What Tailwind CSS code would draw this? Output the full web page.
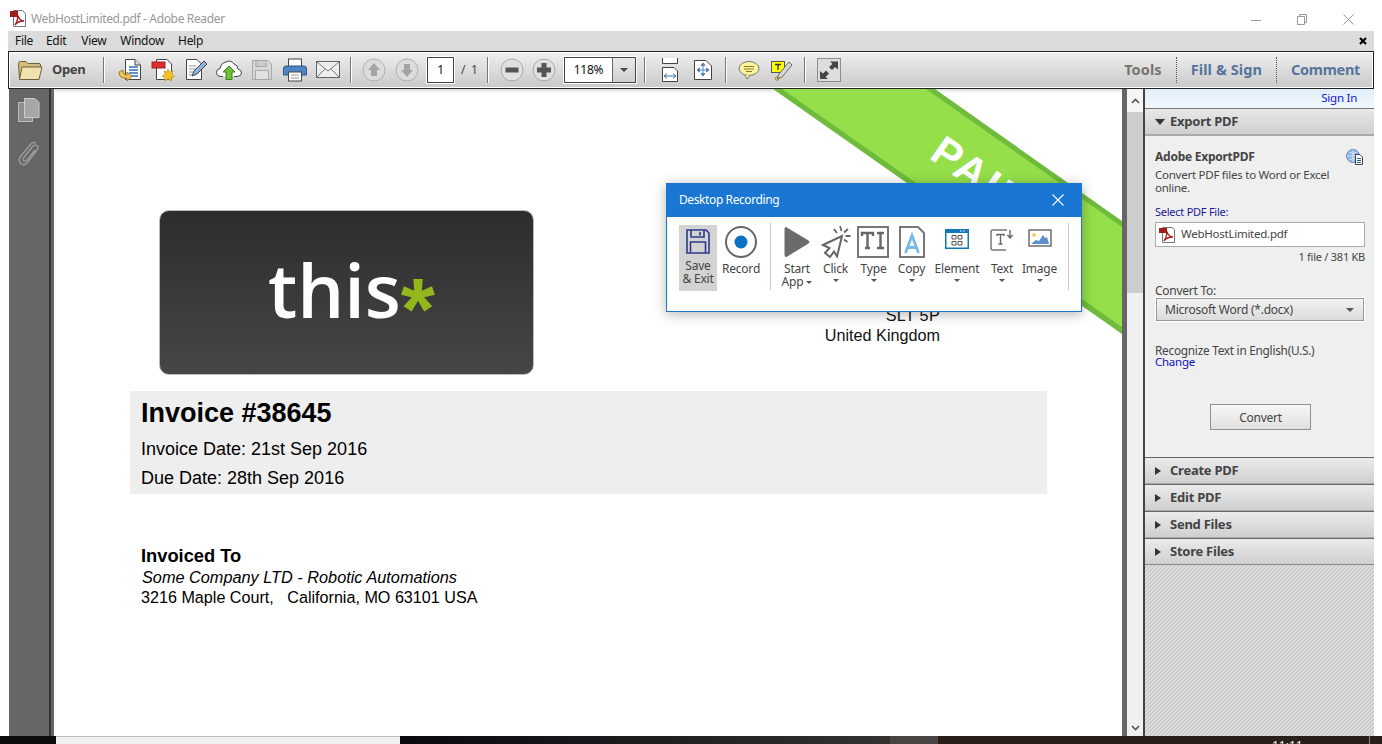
<!DOCTYPE html>
<html><head><meta charset="utf-8"><script src="https://cdn.jsdelivr.net/npm/@tailwindcss/browser@4"></script></head>
<body class="m-0 bg-white overflow-hidden">
<div class="w-[1382px] h-[744px] flex flex-col overflow-hidden font-['Noto_Sans',sans-serif] text-[12px] tracking-[-0.25px] text-[#333] bg-white relative">

<!-- title bar -->
<div class="h-[31px] flex items-center pt-[7px] pl-[10px] pr-[28px] shrink-0">
  <svg width="16" height="18" viewBox="0 0 16 18" class="mr-[5px]"><path d="M3.5 3.5V16.5H15.5V3.5L12.5 .5H3.5Z" fill="#fff" stroke="#777"/><rect x="0" y="1" width="8" height="6" fill="#a01c1c"/><path d="M5 15C8 10 8 7 7.5 5C9 9 11 11 14 11C10 11 7 12 5 15Z" fill="none" stroke="#b01818" stroke-width="1.4"/></svg>
  <span class="text-[#999] text-[12px] tracking-[-0.35px]">WebHostLimited.pdf - Adobe Reader</span>
  <div class="ml-auto flex items-center gap-[35px]">
    <svg width="11" height="11" viewBox="0 0 11 11"><path d="M0 6.5H10" stroke="#999"/></svg>
    <svg width="11" height="11" viewBox="0 0 11 11"><path d="M.5 2.5H7.5V10.5H.5ZM2.5 2.5V.5H9.5V8.5H7.5" fill="none" stroke="#999"/></svg>
    <svg width="11" height="11" viewBox="0 0 11 11"><path d="M.5 .5L10.5 10.5M10.5 .5L.5 10.5" stroke="#999"/></svg>
  </div>
</div>

<!-- window -->
<div class="flex-1 mx-[8px] flex flex-col min-h-0">
  <div class="h-[20px] bg-[#dcdcdc] flex items-center pl-[7px] pr-[7px] gap-[14px] text-[#111] shrink-0 tracking-[-0.3px]">
    <span class="-mr-[1px]">File</span><span class="mr-[1px]">Edit</span><span>View</span><span>Window</span><span>Help</span>
    <svg class="ml-auto" width="8" height="8" viewBox="0 0 8 8"><path d="M1 1L7 7M7 1L1 7" stroke="#000" stroke-width="2.2"/></svg>
  </div>

  <!-- toolbar -->
  <div class="h-[38px] shrink-0 border border-[#222] outline outline-1 outline-white -outline-offset-2 bg-gradient-to-b from-[#efefef] to-[#c9c9c9] flex items-center pl-[9px] pr-[13px]">
    <svg width="25" height="22" viewBox="0 0 25 22" class="mr-[9px]"><path d="M1.5 20.5L.5 4.5Q.5 2.5 2.5 2.5H8L10 4.5H21Q22.5 4.5 22.5 6V8" fill="#d4bd7c" stroke="#6d5f3c"/><path d="M1.5 20.5H21L24 8H4Z" fill="#f1e3b0" stroke="#6d5f3c"/></svg>
    <span class="font-bold text-[13px] text-[#444] w-[33px] tracking-[-0.35px]">Open</span>
    <i class="w-[1px] h-[26px] bg-[#777] border-r border-white box-content ml-[18px] mr-[8px]"></i>
    <div class="w-[33px] flex justify-center"><svg width="24" height="24" viewBox="0 0 24 24"><path d="M7.5 1.5H17L22.5 7V21.5H7.5Z" fill="#fff" stroke="#444"/><path d="M17 1.5V7H22.5" fill="#ddd" stroke="#444"/><path d="M11 9H20M11 12H20M11 15H20M13 18H20" stroke="#2c6dc2" stroke-width="1.4"/><path d="M1 14Q1 21 9 20V23L14 18.5L9 14V17Q5 17 5 12Z" fill="#eec45a" stroke="#a77a20"/></svg></div>
    <div class="w-[33px] flex justify-center"><svg width="24" height="24" viewBox="0 0 24 24"><path d="M5.5 1.5H16L20.5 6V21.5H5.5Z" fill="#fff" stroke="#444"/><rect x="1" y="4" width="13" height="6" fill="#e02c2c" stroke="#922"/><path d="M17 11L18.5 14L22 13L21 16.500L23.500 18.500L20.500 19.500L20.500 23L17 21L14 23L14 19.500L11 18.500L14 16L13 13L16 14Z" fill="#f3bf2b" stroke="#b98a1a" stroke-width=".6"/></svg></div>
    <div class="w-[33px] flex justify-center"><svg width="24" height="24" viewBox="0 0 24 24"><path d="M2.500 1.500H13L17.500 6V21.500H2.500Z" fill="#fff" stroke="#444"/><path d="M5 8H12M5 11H12M5 14H9M5 17H8" stroke="#999"/><path d="M8 18L10 13L20 3L23 6L13 16Z" fill="#8fb2d8" stroke="#444"/></svg></div>
    <div class="w-[33px] flex justify-center"><svg width="26" height="22" viewBox="0 0 26 22"><path d="M7 17.500H5Q.5 17 .5 13.500Q.5 10 4 9.500Q5 4 10 3Q15 .5 18 5Q22 6 22 10Q25.500 11 25.500 14Q25 17.500 21 17.500H18" fill="#fff" stroke="#444"/><path d="M13 7L19 13H16V20.500H10V13H7Z" fill="#6cc13a" stroke="#3d7d1b"/></svg></div>
    <div class="w-[33px] flex justify-center"><svg width="20" height="20" viewBox="0 0 20 20"><path d="M.5 .5H16L19.500 4V19.500H.5Z" fill="#d7d7d7" stroke="#a8a8a8"/><rect x="4" y=".5" width="10" height="6" fill="#ccc" stroke="#a8a8a8"/><rect x="3.500" y="10.500" width="13" height="9" fill="#e2e2e2" stroke="#a8a8a8"/></svg></div>
    <div class="w-[33px] flex justify-center"><svg width="24" height="24" viewBox="0 0 24 24"><rect x="5.500" y="1" width="13" height="8" fill="#fff" stroke="#444"/><path d="M3 8H21Q23.500 8 23.500 11V17H.5V11Q.5 8 3 8Z" fill="#4e86c4" stroke="#34527b"/><rect x="5.500" y="14" width="13" height="9" fill="#fff" stroke="#444"/><path d="M8 17H16M8 20H16" stroke="#999"/></svg></div>
    <div class="w-[33px] flex justify-center"><svg width="24" height="18" viewBox="0 0 24 18"><rect x=".5" y=".5" width="23" height="16" fill="#eee" stroke="#666"/><path d="M1 1L12 10L23 1M1 16L9 8M23 16L15 8" fill="none" stroke="#777"/></svg></div>
    <i class="w-[1px] h-[26px] bg-[#777] border-r border-white box-content ml-[6px] mr-[5px]"></i>
    <div class="w-[33px] flex justify-center"><svg width="24" height="24" viewBox="0 0 24 24"><circle cx="12" cy="12" r="11" fill="#dcdcdc" stroke="#b0b0b0"/><path d="M12 5L18 12H15V18H9V12H6Z" fill="#a4a4a4"/></svg></div>
    <div class="w-[33px] flex justify-center"><svg width="24" height="24" viewBox="0 0 24 24"><circle cx="12" cy="12" r="11" fill="#dcdcdc" stroke="#b0b0b0"/><path d="M12 19L18 12H15V6H9V12H6Z" fill="#a4a4a4"/></svg></div>
    <div class="w-[27px] h-[26px] bg-white border border-[#444] outline outline-1 outline-white text-[#111] text-[12px] flex items-center justify-center ml-[4px]">1</div>
    <span class="w-[25px] text-[#444] text-[12px] pl-[7px] whitespace-pre">/  1</span>
    <i class="w-[1px] h-[26px] bg-[#777] border-r border-white box-content ml-[8px] mr-[6px]"></i>
    <div class="w-[33px] flex justify-center -mr-[1px]"><svg width="24" height="24" viewBox="0 0 24 24"><circle cx="12" cy="12" r="11" fill="#e0e0e0" stroke="#a8a8a8"/><rect x="5.500" y="9.500" width="13" height="5" fill="#555"/></svg></div>
    <div class="w-[33px] flex justify-center"><svg width="24" height="24" viewBox="0 0 24 24"><circle cx="12" cy="12" r="11" fill="#e0e0e0" stroke="#a8a8a8"/><path d="M9.500 5H14.500V9.500H19V14.500H14.500V19H9.500V14.500H5V9.500H9.500Z" fill="#555"/></svg></div>
    <div class="ml-[4px] w-[72px] h-[26px] border border-[#444] outline outline-1 outline-white flex">
      <span class="w-[48px] bg-white text-[#111] text-[12px] flex items-center justify-center border-r border-[#666]">118%</span>
      <span class="flex-1 flex items-center justify-center"><i class="border-x-[4px] border-x-transparent border-t-[4px] border-t-[#444]"></i></span>
    </div>
    <i class="w-[1px] h-[26px] bg-[#777] border-r border-white box-content ml-[8px] mr-[7px]"></i>
    <div class="w-[33px] flex justify-center"><svg width="18" height="24" viewBox="0 0 18 24"><path d="M1.500 0V5.500H16.500V0M1.500 9.500H13L16.500 13V23.500H1.500Z" fill="#fff" stroke="#444"/><path d="M3 18H15M3 18L6 15.500M3 18L6 20.500M15 18L12 15.500M15 18L12 20.500" stroke="#3f6fb0" fill="none"/></svg></div>
    <div class="w-[33px] flex justify-center"><svg width="18" height="20" viewBox="0 0 18 20"><path d="M.5 .5H12L17.500 6V19.500H.5Z" fill="#fff" stroke="#444"/><path d="M9 3V16M3 10H15M9 3L7 5.500H11ZM9 16L7 13.500H11ZM3 10L5.500 8V12ZM15 10L12.500 8V12Z" stroke="#5b86bd" fill="#5b86bd"/></svg></div>
    <i class="w-[1px] h-[26px] bg-[#777] border-r border-white box-content ml-[6px] mr-[5px]"></i>
    <div class="w-[33px] flex justify-center"><svg width="22" height="20" viewBox="0 0 22 20"><ellipse cx="11" cy="8.500" rx="10" ry="7" fill="#fbf39a" stroke="#777"/><path d="M7 15L9 19L12 15.500" fill="#fbf39a" stroke="#777"/><path d="M6 6.500H16M6 9H16M8 11.500H14" stroke="#8a7a30"/></svg></div>
    <div class="w-[33px] flex justify-center"><svg width="22" height="22" viewBox="0 0 22 22"><rect x=".5" y="2.500" width="13" height="11" fill="#ff0" stroke="#555"/><path d="M4 5.500H10M7 5.500V11" stroke="#333" stroke-width="1.400"/><path d="M6 20L8 15L18 3L21 6L11 18Z" fill="#d8d8d8" stroke="#666"/><circle cx="6" cy="19.500" r="1.800" fill="none" stroke="#a88f20"/></svg></div>
    <i class="w-[1px] h-[26px] bg-[#777] border-r border-white box-content ml-[6px] mr-[6px]"></i>
    <div class="w-[33px] flex justify-center"><svg width="24" height="24" viewBox="0 0 24 24"><rect x=".5" y=".5" width="23" height="23" fill="#ddd" stroke="#8d8d8d"/><path d="M13 3.500H21V11.500L18 9L15 12L12 9L15.500 6ZM11 21H3V13L6 15.500L9 12.500L12 15.500L8.500 19Z" fill="#444"/></svg></div>
    <div class="ml-auto flex items-center font-bold text-[14.500px] tracking-[-0.3px]">
      <span class="text-[#77736e] tracking-[0.1px]">Tools</span>
      <i class="h-[26px] border-l border-dotted border-[#555] ml-[14px] mr-[14px]"></i>
      <span class="text-[#56749c] tracking-[0.1px]">Fill &amp; Sign</span>
      <i class="h-[26px] border-l border-dotted border-[#555] ml-[14px] mr-[14px]"></i>
      <span class="text-[#56749c]">Comment</span>
    </div>
  </div>

  <!-- main -->
  <div class="flex-1 flex min-h-0">
    <!-- rail -->
    <div class="w-[40px] ml-[1px] bg-[#666] shrink-0 flex flex-col items-center pt-[9px] gap-[19px]">
      <svg width="22" height="24" viewBox="0 0 22 24"><rect x=".5" y="4.500" width="14" height="19" fill="#8e8e8e" stroke="#bbb"/><path d="M6.500 .5H17L21 4.500V19.500H6.500Z" fill="#a6a6a6" stroke="#ccc"/></svg>
      <svg width="22" height="26" viewBox="0 0 22 26"><path d="M18 2Q15 .5 12.500 3.500L2.500 15.500Q0 19 2.500 22.500Q6 25 9 22L19 9Q21 6 19 4.500Q17 3 14.500 5.500L5.500 17Q4.500 19 6 20Q7.500 20.500 9 19L17 9" fill="none" stroke="#9a9a9a" stroke-width="1.500"/></svg>
    </div>
    <div class="w-[5px] shrink-0 bg-[#666] border-l-2 border-[#333]"></div>

    <!-- document -->
    <div class="w-[1068px] shrink-0 bg-white relative overflow-hidden pt-[121px] text-black font-['Liberation_Sans',sans-serif] tracking-normal">
      <div class="absolute left-0 right-0 top-0 h-[4px] bg-gradient-to-b from-[#ddd] to-white"></div>
      <svg class="absolute left-0 top-0" width="1068" height="260" viewBox="0 0 1068 260"><polygon points="719,0 881,0 1068,132 1068,245" fill="#6fbb3c"/><polygon points="728,0 872,0 1068,138 1068,238" fill="#95df4b"/></svg>
      <div class="absolute left-[894px] top-[40px] text-white font-bold text-[42px] leading-none rotate-[35deg] origin-top-left tracking-[3px]">PAID</div>

      <div class="flex items-end pl-[105px] w-[886px] justify-between relative">
        <div class="w-[375px] h-[165px] rounded-[10px] bg-gradient-to-b from-[#2d2d2d] to-[#464646] border border-[#bbb] flex items-center justify-center pl-[10px] pb-[6px] overflow-hidden">
          <span class="font-['Open_Sans',sans-serif] font-semibold text-[74px] leading-none text-white blur-[0.6px] whitespace-nowrap">this<span class="font-['Liberation_Sans',sans-serif] font-bold text-[#93b81c] text-[88px] leading-[0] relative top-[21px]">*</span></span>
        </div>
        <div class="text-right text-[16.200px] leading-[20px] mb-[30px] text-[#111]"><div class="tracking-[0.3px]">SLT 5P</div><div>United Kingdom</div></div>
      </div>

      <div class="ml-[76px] mr-[76px] mt-[16px] w-[917px] h-[103px] bg-[#eeeeee] pl-[11px] pt-[6px]">
        <div class="font-bold text-[27px] leading-[32px]">Invoice #38645</div>
        <div class="text-[18px] leading-[29px] mt-[6px]">Invoice Date: 21st Sep 2016</div>
        <div class="text-[18px] leading-[29px]">Due Date: 28th Sep 2016</div>
      </div>

      <div class="ml-[87px] mt-[50px]">
        <div class="font-bold text-[18.300px] leading-[23px]">Invoiced To</div>
        <div class="italic text-[16.300px] leading-[20px] pl-[1px]">Some Company LTD - Robotic Automations</div>
        <div class="text-[16.150px] leading-[20px] whitespace-pre">3216 Maple Court,   California, MO 63101 USA</div>
      </div>
    </div>

    <div class="w-[5px] shrink-0 bg-[#666]"></div>

    <!-- scrollbar -->
    <div class="w-[16px] shrink-0 bg-[#f0f0f0] flex flex-col">
      <div class="h-[23px] flex items-center justify-center bg-[#f5f5f5]"><svg width="9" height="6" viewBox="0 0 9 6"><path d="M1 5L4.500 1.500L8 5" fill="none" stroke="#555" stroke-width="1.600"/></svg></div>
      <div class="h-[181px] bg-[#cdcdcd]"></div>
      <div class="mt-auto h-[17px] flex items-center justify-center"><svg width="9" height="6" viewBox="0 0 9 6"><path d="M1 1L4.500 4.500L8 1" fill="none" stroke="#555" stroke-width="1.600"/></svg></div>
    </div>
    <div class="w-[2px] shrink-0 bg-[#444]"></div>

    <!-- right panel -->
    <div class="flex-1 flex flex-col bg-[#efefef] text-[11.500px] leading-[13px] text-[#444] min-w-0">
      <div class="h-[20px] shrink-0 bg-gradient-to-b from-[#e0effb] to-[#f2f8fd] border-b border-[#777] text-right pr-[17px] pt-[2px] text-[#1010e0] text-[11.500px]">Sign In</div>
      <div class="h-[27px] shrink-0 bg-gradient-to-b from-[#e8e8e8] to-[#cfcfcf] border-b-2 border-[#aaa] flex items-center pl-[10px] font-bold text-[#444] text-[13px]">
        <i class="border-x-[5px] border-x-transparent border-t-[6px] border-t-[#333] mr-[5px]"></i>Export PDF
      </div>
      <div class="h-[321px] shrink-0 px-[10px] pt-[13px] relative">
        <div class="flex items-center justify-between pr-[1px]"><span class="font-bold text-[12px] leading-[16px]">Adobe ExportPDF</span>
          <svg width="17" height="16" viewBox="0 0 17 16"><circle cx="7" cy="7" r="6.500" fill="#8db3e6" stroke="#6d8fbd"/><path d="M1 7H13M7 1V13M3 3Q7 6 11 3M3 11Q7 8 11 11" stroke="#d7e5f7" fill="none"/><path d="M9.500 5.500H14L16.500 8V15.500H9.500Z" fill="#fff" stroke="#445"/><path d="M11 9.500H15M11 11.500H15M11 13.500H15" stroke="#2c5fa8"/></svg>
        </div>
        <p class="mt-[3px] w-[190px]">Convert PDF files to Word or Excel online.</p>
        <div class="mt-[11px] text-[#1a1a9a] text-[11px] leading-[13px]" >Select PDF File:</div>
        <div class="mt-[4px] w-[210px] h-[25px] border border-[#a8a8a8] bg-white flex items-center pl-[3px] pb-[3px] text-[11.500px]">
          <svg width="16" height="16" viewBox="0 0 16 16" class="mr-[6px] mt-[3px]"><path d="M3.500 2.500V15.500H15.500V2.500L13 .5H3.500Z" fill="#fff" stroke="#777"/><rect x="0" y="1" width="8" height="5" fill="#a01c1c"/><path d="M5 14C8 9 8 6 7.500 4C9 8 11 10 14 10C10 10 7 11 5 14Z" fill="none" stroke="#b01818" stroke-width="1.300"/></svg>WebHostLimited.pdf
        </div>
        <div class="w-[210px] text-right mt-[3px] text-[#444] text-[11px]">1 file / 381 KB</div>
        <div class="mt-[21px] text-[12px]">Convert To:</div>
        <div class="mt-[1px] ml-[1px] w-[208px] h-[23px] bg-gradient-to-b from-[#f2f2f2] to-[#dcdcdc] border border-[#999] outline outline-1 outline-white flex items-center pl-[8px] pr-[9px] text-[12px]">Microsoft Word (*.docx)<i class="ml-auto border-x-[4px] border-x-transparent border-t-[4px] border-t-[#555]"></i></div>
        <div class="mt-[24px] text-[11.800px] leading-[11px]">Recognize Text in English(U.S.)</div>
        <div class="text-[#1212c0] leading-[11px]">Change</div>
        <div class="mt-[37px] ml-[55px] w-[101px] h-[26px] border border-[#8f8f8f] bg-gradient-to-b from-[#f7f7f7] to-[#e0e0e0] flex items-center justify-center text-[12px]">Convert</div>
      </div>
      <div class="h-[27px] shrink-0 bg-gradient-to-b from-[#ebebeb] to-[#cfcfcf] border-t border-[#666] border-b border-b-[#aaa] flex items-center pl-[10px] font-bold text-[13px]"><i class="border-y-[4px] border-y-transparent border-l-[6px] border-l-[#333] mr-[9px]"></i>Create PDF</div>
      <div class="h-[27px] shrink-0 bg-gradient-to-b from-[#ebebeb] to-[#cfcfcf] border-t border-[#666] border-b border-b-[#aaa] flex items-center pl-[10px] font-bold text-[13px]"><i class="border-y-[4px] border-y-transparent border-l-[6px] border-l-[#333] mr-[9px]"></i>Edit PDF</div>
      <div class="h-[27px] shrink-0 bg-gradient-to-b from-[#ebebeb] to-[#cfcfcf] border-t border-[#666] border-b border-b-[#aaa] flex items-center pl-[10px] font-bold text-[13px]"><i class="border-y-[4px] border-y-transparent border-l-[6px] border-l-[#333] mr-[9px]"></i>Send Files</div>
      <div class="h-[27px] shrink-0 bg-gradient-to-b from-[#ebebeb] to-[#cfcfcf] border-t border-[#666] border-b border-b-[#888] flex items-center pl-[10px] font-bold text-[13px]"><i class="border-y-[4px] border-y-transparent border-l-[6px] border-l-[#333] mr-[9px]"></i>Store Files</div>
      <div class="flex-1 bg-[repeating-linear-gradient(135deg,#dcdcdc_0,#dcdcdc_1.9px,#bcbcbc_1.9px,#bcbcbc_2.828px)]"></div>
    </div>
  </div>
</div>

<!-- bottom strip: desktop behind the window -->
<div class="h-[8px] shrink-0 flex bg-[#0c0c0c]">
  <div class="w-[56px]"></div>
  <div class="w-[344px] bg-[#f0f0f0] border-t border-[#bbb]"></div>
  <div class="w-[490px] bg-gradient-to-r from-[#090a0f] to-[#343332]"></div>
  <div class="w-[48px] bg-[#4a4543]"></div>
  <div class="flex-1 bg-[#2a1f18] relative overflow-hidden"><span class="absolute left-[334px] top-[3px] text-[#eee] text-[12px] leading-[14px] tracking-normal">11:11</span><i class="absolute left-[431px] top-0 h-full w-[1px] bg-[#888]"></i></div>
</div>

<!-- floating dialog -->
<div class="absolute left-[666px] top-[183px] w-[416px] h-[129px] bg-white border border-[#1976d2] shadow-[0_2px_12px_rgba(0,0,0,0.3)] text-[#444] text-[12px] leading-[13px] tracking-[-0.2px]">
  <div class="h-[33px] bg-[#1976d2] text-white flex items-center pl-[12px] pr-[17px] pb-[2px] tracking-[-0.4px]">Desktop Recording
    <svg class="ml-auto" width="12" height="12" viewBox="0 0 12 12"><path d="M.5 .5L11.500 11.500M11.500 .5L.5 11.500" stroke="#fff" stroke-width="1.100"/></svg>
  </div>
  <div class="flex items-start pl-[12px] pt-[8px]">
    <div class="w-[38px] h-[66px] bg-[#d3d3d3] flex flex-col items-center pt-[4px] shrink-0">
      <svg width="24" height="25" viewBox="0 0 24 25"><path d="M1 1H20L23 4V24H1Z" fill="none" stroke="#2c3a8c" stroke-width="1.600"/><path d="M5 1V8H18V1M14 3V6.500" fill="none" stroke="#2c3a8c" stroke-width="1.600"/><path d="M4.500 24V13H19.500V24" fill="none" stroke="#2c3a8c" stroke-width="1.600"/></svg>
      <div class="mt-[5px] text-center">Save<br>&amp; Exit</div>
    </div>
    <div class="w-[48px] flex flex-col items-center pt-[1px] shrink-0">
      <svg width="32" height="32" viewBox="0 0 32 32"><circle cx="16" cy="16" r="15" fill="none" stroke="#666" stroke-width="2"/><circle cx="16" cy="16" r="6.500" fill="#0a72c4"/></svg>
      <div class="mt-[4px]">Record</div>
    </div>
    <i class="w-[1px] h-[67px] bg-[#c8c8c8] ml-[5px] mr-[6px] -mt-[2px] shrink-0"></i>
    <div class="w-[40px] flex flex-col items-center pt-[1px] shrink-0">
      <svg width="26" height="32" viewBox="0 0 26 32"><path d="M2 1.500Q1 1 1 3V29Q1 31 2.500 30.500L24.500 17Q25.500 16 24.500 15Z" fill="#6a6b6d" stroke="#6a6b6d"/></svg>
      <div class="mt-[4px] h-[13px]">Start</div>
      <div class="h-[13px] flex items-center">App<i class="ml-[3px] mt-[2px] border-x-[3.500px] border-x-transparent border-t-[3.500px] border-t-[#555]"></i></div>
    </div>
    <div class="w-[37px] flex flex-col items-center pt-[1px] shrink-0">
      <svg width="30" height="32" viewBox="0 0 30 32" class="shrink-0"><path d="M21 10L2 19L8.500 22L4 27L9 31L13 25.500L16 30.500Z" fill="none" stroke="#666" stroke-width="2"/><path d="M19 0L20.500 5M29.500 10H24.500M27 3L23 6.500M26.500 16L23 13.500M13 3L16 7" stroke="#666" stroke-width="1.800"/></svg>
      <div class="mt-[4px]">Click</div>
      <i class="mt-[4px] border-x-[3.500px] border-x-transparent border-t-[3.500px] border-t-[#555]"></i>
    </div>
    <div class="w-[39px] flex flex-col items-center pt-[1px] shrink-0">
      <svg width="32" height="32" viewBox="0 0 32 32" class="-ml-[2px]"><rect x="1" y="1" width="30" height="30" fill="none" stroke="#777" stroke-width="2"/><path d="M5 10V7H16V10M10.500 7V22M8 22H13M20 7H27M23.500 7V22M20 22H27" fill="none" stroke="#666" stroke-width="2.400"/></svg>
      <div class="mt-[4px]">Type</div>
      <i class="mt-[4px] border-x-[3.500px] border-x-transparent border-t-[3.500px] border-t-[#555]"></i>
    </div>
    <div class="w-[37px] flex flex-col items-center pt-[1px] shrink-0">
      <svg width="26" height="32" viewBox="0 0 26 32"><path d="M1 1H19L25 7V31H1Z" fill="none" stroke="#777" stroke-width="2"/><path d="M6.500 27L13 9.500L19.500 27M9 21.500H17" fill="none" stroke="#75bce9" stroke-width="2.800"/></svg>
      <div class="mt-[4px]">Copy</div>
      <i class="mt-[4px] border-x-[3.500px] border-x-transparent border-t-[3.500px] border-t-[#555]"></i>
    </div>
    <div class="w-[54px] flex flex-col items-center pt-[4px] shrink-0">
      <svg width="24" height="29" viewBox="0 0 24 29" class="-mb-[3px]"><rect x="0" y="0" width="24" height="20" fill="#1177bb"/><rect x="1.500" y="4" width="21" height="14.500" fill="#fff"/><path d="M15 2H16.500M18 2H19.500" stroke="#fff"/><path d="M21 2H22.500" stroke="#e46"/><path d="M7 6.500H11V10H7ZM13 6.500H17V10H13ZM7 12.500H11V16H7ZM13 12.500H17V16H13Z" fill="none" stroke="#555"/></svg>
      <div class="mt-[7px]">Element</div>
      <i class="mt-[4px] border-x-[3.500px] border-x-transparent border-t-[3.500px] border-t-[#555]"></i>
    </div>
    <div class="w-[36px] flex flex-col items-center pt-[4px] shrink-0">
      <svg width="24" height="29" viewBox="0 0 24 29" class="-mb-[3px]"><path d="M17 1H3Q1 1 1 3V19Q1 21 3 21H16" fill="none" stroke="#777" stroke-width="1.500"/><path d="M7 7V5.500H14V7M10.500 5.500V15M8.500 15H12.500" fill="none" stroke="#666" stroke-width="1.400"/><path d="M20 1V8M17.500 6L20 9L22.500 6" fill="none" stroke="#666" stroke-width="1.400"/></svg>
      <div class="mt-[7px]">Text</div>
      <i class="mt-[4px] border-x-[3.500px] border-x-transparent border-t-[3.500px] border-t-[#555]"></i>
    </div>
    <div class="w-[39px] flex flex-col items-center pt-[4px] shrink-0">
      <svg width="24" height="29" viewBox="0 0 24 29" class="-mb-[3px]"><rect x="1" y="1" width="22" height="16" fill="#fff" stroke="#777" stroke-width="1.600"/><circle cx="6" cy="6" r="1.800" fill="#f3c74a"/><path d="M3 15L8 11L11 12L15 6L17 9L19 8L21 15Z" fill="#5b8fd0"/></svg>
      <div class="mt-[7px]">Image</div>
      <i class="mt-[4px] border-x-[3.500px] border-x-transparent border-t-[3.500px] border-t-[#555]"></i>
    </div>
    <i class="w-[1px] h-[67px] bg-[#c8c8c8] ml-[9px] -mt-[2px] shrink-0"></i>
  </div>
</div>
</div>
</body></html>
